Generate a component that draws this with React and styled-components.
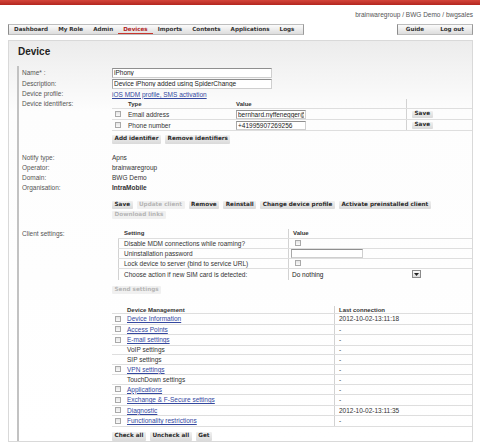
import React from "react";
import styled, { createGlobalStyle } from "styled-components";

const GlobalStyle = createGlobalStyle`
  * { box-sizing: border-box; }
  html, body { margin: 0; padding: 0; background: #fff; }
  body {
    width: 480px;
    height: 442px;
    overflow: hidden;
    font-family: "Liberation Sans", Arial, sans-serif;
    font-size: 6.5px;
    color: #333;
  }
`;

const TopBar = styled.div`
  height: 5px;
  background: linear-gradient(#d4453b, #b3261f);
`;

const UserLine = styled.div`
  height: 19px;
  display: flex;
  align-items: center;
  justify-content: flex-end;
  padding-right: 7px;
  color: #555;
`;

const NavRow = styled.div`
  display: flex;
  justify-content: space-between;
  height: 11px;
  margin: 0 7px 0 8px;
`;

const TabStrip = styled.div`
  display: flex;
  border: 1px solid #bdbdbd;
  border-left-color: #8c8c8c;
  border-right-color: #9a9a9a;
  background: linear-gradient(#fbfbfb, #dddddd);
  padding: 0 ${(p) => p.$pad}px 0 0;
`;

const Tab = styled.a`
  display: flex;
  align-items: center;
  padding: 0 ${(p) => p.$pad || 5}px;
  font-family: "DejaVu Sans", Verdana, sans-serif;
  font-weight: bold;
  font-size: 5.6px;
  text-decoration: none;
  color: ${(p) => (p.$active ? "#b3261e" : "#333")};
  border-bottom: 1px solid ${(p) => (p.$active ? "#c7342c" : "transparent")};
`;

const Panel = styled.div`
  margin: 5px 7px 0 8px;
  border: 1px solid #d9d9d9;
  background: linear-gradient(#ececec, #fdfdfd 70px, #fff);
  height: 402px;
  overflow: hidden;
`;

const Heading = styled.h1`
  margin: 0 0 7px;
  padding: 4px 0 0 9px;
  font-size: 10px;
  line-height: 14px;
  font-weight: bold;
  color: #222;
`;

const Form = styled.div`
  margin-left: 8px;
  border-left: 2px solid #c2c2c2;
  padding: 1px 0 0 3px;
  height: 400px;
`;

const Field = styled.div`
  display: grid;
  grid-template-columns: 90px 1fr;
  align-items: ${(p) => (p.$top ? "start" : "center")};
  min-height: ${(p) => p.$h || 0}px;
  margin-top: ${(p) => p.$mt || 0}px;
`;

const Label = styled.span`
  color: #555;
  line-height: ${(p) => p.$lh || 10}px;
`;

const Value = styled.span`
  font-weight: ${(p) => (p.$bold ? "bold" : "normal")};
  color: #333;
`;

const TextInput = styled.input`
  width: ${(p) => p.$w}px;
  height: ${(p) => p.$h || 10}px;
  padding: 0 1px;
  margin: 0;
  border: 1px solid #cfcfcf;
  border-top-color: #8f8f8f;
  border-left-color: #a8a8a8;
  background: #fff;
  font-family: "Liberation Sans", Arial, sans-serif;
  font-size: 6.5px;
  color: #222;
  outline: none;
`;

const Link = styled.a`
  color: #34489f;
  text-decoration: underline;
  font-size: 6.5px;
`;

const Table = styled.div`
  margin-left: ${(p) => p.$ml || 0}px;
`;

const Row = styled.div`
  display: grid;
  grid-template-columns: ${(p) => p.$cols};
  height: ${(p) => p.$h}px;
  border-bottom: ${(p) => (p.$line ? "1px solid #dedede" : "none")};
`;

const Cell = styled.div`
  display: flex;
  align-items: center;
  padding-left: ${(p) => p.$pl || 0}px;
  border-left: ${(p) => (p.$divider ? "1px solid #d2d2d2" : "none")};
  font-weight: ${(p) => (p.$head ? "bold" : "normal")};
  font-size: ${(p) => p.$fs || 6.5}px;
  color: #333;
  white-space: nowrap;
  overflow: hidden;
`;

const Check = styled.span`
  display: inline-block;
  width: 6px;
  height: 6px;
  margin-left: ${(p) => p.$ml ?? 3}px;
  border: 1px solid #a9a9a9;
  background: linear-gradient(#e4e4e4, #f9f9f9);
`;

const ButtonBar = styled.div`
  display: flex;
  flex-wrap: wrap;
  gap: 1.5px 4px;
  margin-top: ${(p) => p.$mt || 0}px;
`;

const Button = styled.button`
  height: ${(p) => (p.$small ? 7 : 8.5)}px;
  padding: 0 2.5px;
  margin: 0;
  border: none;
  border-radius: 1px;
  font-family: "DejaVu Sans", Verdana, sans-serif;
  font-weight: bold;
  font-size: 5.7px;
  line-height: 1;
  color: ${(p) => (p.disabled ? "#b5b5b5" : "#2a2a2a")};
  background: ${(p) =>
    p.disabled ? "#f0f0f0" : "linear-gradient(#f0f0f0, #dadada)"};
`;

const Select = styled.div`
  display: flex;
  align-items: center;
  justify-content: space-between;
  width: 130px;
  height: 9px;
  padding-left: 1px;
  color: #222;
`;

const SelectArrow = styled.span`
  display: flex;
  align-items: center;
  justify-content: center;
  width: 9px;
  height: 8px;
  border: 1px solid #8a8a8a;
  background: linear-gradient(#fafafa, #dcdcdc);
`;

const identifiers = [
  { type: "Email address", value: "bernhard.nyffenegger@brainware.ch" },
  { type: "Phone number", value: "+41995907269256" },
];

const settings = [
  { name: "Disable MDM connections while roaming?", kind: "check" },
  { name: "Uninstallation password", kind: "input" },
  { name: "Lock device to server (bind to service URL)", kind: "check" },
  { name: "Choose action if new SIM card is detected:", kind: "select" },
];

const modules = [
  { name: "Device Information", last: "2012-10-02-13:11:18", check: true },
  { name: "Access Points", last: "-", check: true },
  { name: "E-mail settings", last: "-", check: true },
  { name: "VoIP settings", last: "-" },
  { name: "SIP settings", last: "-" },
  { name: "VPN settings", last: "-", check: true },
  { name: "TouchDown settings", last: "-" },
  { name: "Applications", last: "-", check: true },
  { name: "Exchange & F-Secure settings", last: "-", check: true },
  { name: "Diagnostic", last: "2012-10-02-13:11:35", check: true },
  { name: "Functionality restrictions", last: "-", check: true },
];

const tabs = ["Dashboard", "My Role", "Admin", "Devices", "Imports", "Contents", "Applications", "Logs"];

function IdentifierTable() {
  const cols = "12px 111px 171px 1fr";
  return (
    <Table>
      <Row $cols={cols} $h={10} $line>
        <Cell />
        <Cell $head $pl={4} $fs={6}>Type</Cell>
        <Cell $head $pl={1} $fs={6}>Value</Cell>
        <Cell $divider />
      </Row>
      {identifiers.map((id) => (
        <Row key={id.type} $cols={cols} $h={11} $line>
          <Cell><Check /></Cell>
          <Cell $pl={4}>{id.type}</Cell>
          <Cell $pl={1}>
            <TextInput $w={70} $h={9} readOnly defaultValue={id.value} />
          </Cell>
          <Cell $divider $pl={5}>
            <Button $small>Save</Button>
          </Cell>
        </Row>
      ))}
    </Table>
  );
}

function SettingsTable() {
  const cols = "170px 1fr";
  return (
    <Table $ml={6}>
      <Row $cols={cols} $h={10} $line>
        <Cell $head $pl={6} $fs={6}>Setting</Cell>
        <Cell $head $divider $pl={4} $fs={6}>Value</Cell>
      </Row>
      {settings.map((s, i) => (
        <Row key={s.name} $cols={cols} $h={i === 3 ? 11 : 10} $line={i < 3}>
          <Cell $divider $pl={5}>{s.name}</Cell>
          <Cell $divider $pl={2}>
            {s.kind === "check" && <Check $ml={4} />}
            {s.kind === "input" && <TextInput $w={72} $h={9} readOnly />}
            {s.kind === "select" && (
              <Select>
                <span>Do nothing</span>
                <SelectArrow>
                  <svg width="5" height="3" viewBox="0 0 5 3">
                    <path d="M0 0h5L2.5 3z" fill="#222" />
                  </svg>
                </SelectArrow>
              </Select>
            )}
          </Cell>
        </Row>
      ))}
    </Table>
  );
}

function ModuleTable() {
  const cols = "12px 210px 1fr";
  return (
    <Table>
      <Row $cols={cols} $h={8} $line>
        <Cell />
        <Cell $head $pl={3} $fs={6}>Device Management</Cell>
        <Cell $head $divider $pl={4} $fs={6}>Last connection</Cell>
      </Row>
      {modules.map((m) => (
        <Row key={m.name} $cols={cols} $h={m.check ? 10.5 : 9.5} $line>
          <Cell>{m.check && <Check />}</Cell>
          <Cell $pl={3} $fs={m.check ? 6.5 : 6.5}>
            {m.check ? <Link href="#">{m.name}</Link> : m.name}
          </Cell>
          <Cell $divider $pl={4}>{m.last}</Cell>
        </Row>
      ))}
    </Table>
  );
}

export default function App() {
  return (
    <>
      <GlobalStyle />
      <TopBar />
      <UserLine>brainwaregroup / BWG Demo / bwgsales</UserLine>
      <NavRow>
        <TabStrip $pad={4}>
          {tabs.map((t) => (
            <Tab key={t} href="#" $active={t === "Devices"}>{t}</Tab>
          ))}
        </TabStrip>
        <TabStrip $pad={0}>
          <Tab href="#" $pad={8}>Guide</Tab>
          <Tab href="#" $pad={8}>Log out</Tab>
        </TabStrip>
      </NavRow>

      <Panel>
        <Heading>Device</Heading>
        <Form>
          <Field $h={11}>
            <Label>Name* :</Label>
            <div><TextInput $w={160} readOnly defaultValue="iPhony" /></div>
          </Field>
          <Field $h={11}>
            <Label>Description:</Label>
            <div><TextInput $w={160} readOnly defaultValue="Device iPhony added using SpiderChange" /></div>
          </Field>
          <Field $h={9}>
            <Label>Device profile:</Label>
            <div><Link href="#">iOS MDM profile, SMS activation</Link></div>
          </Field>
          <Field $top>
            <Label>Device identifiers:</Label>
            <div>
              <IdentifierTable />
              <ButtonBar $mt={4}>
                <Button>Add identifier</Button>
                <Button>Remove identifiers</Button>
              </ButtonBar>
            </div>
          </Field>

          <Field $h={9.6} $mt={9}>
            <Label>Notify type:</Label>
            <Value>Apns</Value>
          </Field>
          <Field $h={9.6}>
            <Label>Operator:</Label>
            <Value>brainwaregroup</Value>
          </Field>
          <Field $h={9.6}>
            <Label>Domain:</Label>
            <Value>BWG Demo</Value>
          </Field>
          <Field $h={9.6}>
            <Label>Organisation:</Label>
            <Value $bold>IntraMobile</Value>
          </Field>

          <Field $mt={8}>
            <span />
            <ButtonBar>
              <Button>Save</Button>
              <Button disabled>Update client</Button>
              <Button>Remove</Button>
              <Button>Reinstall</Button>
              <Button>Change device profile</Button>
              <Button>Activate preinstalled client</Button>
              <Button disabled>Download links</Button>
            </ButtonBar>
          </Field>

          <Field $top $mt={9.5}>
            <Label>Client settings:</Label>
            <div>
              <SettingsTable />
              <ButtonBar $mt={6}>
                <Button disabled>Send settings</Button>
              </ButtonBar>
            </div>
          </Field>

          <Field $top $mt={12}>
            <span />
            <div>
              <ModuleTable />
              <ButtonBar $mt={5.5}>
                <Button>Check all</Button>
                <Button>Uncheck all</Button>
                <Button>Get</Button>
              </ButtonBar>
            </div>
          </Field>
        </Form>
      </Panel>
    </>
  );
}
